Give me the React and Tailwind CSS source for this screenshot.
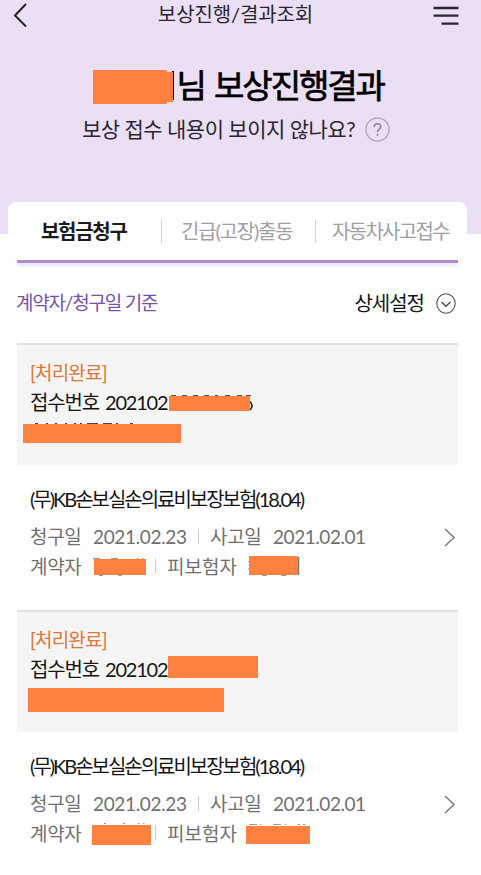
import React from 'react';
import clsx from 'clsx';

const claims = [
  {
    id: 1,
    receipt: '202102',
    masks: [
      'left-[152px] top-[53px] w-[81px] h-[15px]',
      'left-[6px] top-[81px] w-[158px] h-[19px]',
    ],
    contractorMask: 'left-[94px] top-[8px] w-[52px] h-[16px]',
    insuredMask: 'left-[249px] top-[5px] w-[49px] h-[19px]',
  },
  {
    id: 2,
    receipt: '202102',
    masks: [
      'left-[151px] top-[46px] w-[90px] h-[22px]',
      'left-[11px] top-[78px] w-[196px] h-[24px]',
    ],
    contractorMask: 'left-[92px] top-[7px] w-[59px] h-[20px]',
    insuredMask: 'left-[246px] top-[8px] w-[64px] h-[18px]',
  },
];

const Mask = ({ className }) => <span className={clsx('absolute bg-[#ff8140]', className)} />;

// Ink left visible around the masked receipt number and names
const Traces = ({ first }) => (
  <svg className="absolute left-0 top-0 w-[441px] h-[267px] pointer-events-none" viewBox="0 0 441 267" fill="none">
    {first ? (
      <>
        <path d="M154 52.500h5M165 52.500h5M176 52.500h5M187 52.500h5M198 52.500h3M208 52.500h5M220 52.500h5M229 52.500h5" stroke="#555" strokeWidth="1" />
        <path d="M233 58.500q4 4 0 8.500" stroke="#222" strokeWidth="1.500" />
        <path d="M18 80.500h3M29 80.500h2M38 80.500h2M48 80.500h2M57 80.500h2M63 80.500h2M70 80.500h11M86 80.500h9M99 80.500h2M113 80.500h3" stroke="#444" strokeWidth="1" />
        <path d="M76 215.500h7M94 215.500h7M120 215.500h1.500M125 215.500h1.500M82 232.500h4M101 232.500h4M231 218.500h1.500M231 226h1.500M245 232.500h5M264 232.500h5" stroke="#999" strokeWidth="1" />
        <path d="M281.500 214v18" stroke="#777" strokeWidth="1.500" />
      </>
    ) : (
      <path d="M87 213.500h2M106 213.500h2M121 213.500h1.500M126 213.500h1.500M232 214.500h8M243 214.500h1.500M256 214.500h8M268 214.500h1.500M281 214.500h2M286 214.500h2" stroke="#999" strokeWidth="1" />
    )}
  </svg>
);

const Divider = ({ className }) => <span className={clsx('w-px shrink-0', className)} />;

const ClaimItem = ({ claim }) => (
  <li className="relative h-[267px]">
    <div className="h-[121.500px] bg-[#f5f5f5] border-t-2 border-[#e1e1e1] pl-[13px] pt-[13px]">
      <p className="h-[29px] leading-[30px] text-[19px] tracking-[-0.800px] text-[#dc7833]">[처리완료]</p>
      <p className="h-[31px] leading-[31px] text-[20px] text-[#151515] flex">
        <span className="w-[75px] tracking-[-1.150px]">접수번호</span>
        <span className="tracking-[-1.200px]">{claim.receipt}</span>
      </p>
    </div>

    <div className="pl-[13px] pt-[19.500px]">
      <h3 className="h-[30px] leading-[30px] text-[20px] tracking-[-2.020px] text-[#151515] whitespace-nowrap">
        (무)KB손보실손의료비보장보험(18.04)
      </h3>
    </div>
    <Traces first={claim.id === 1} />
    {claim.masks.map((m) => <Mask key={m} className={m} />)}
    <div className="relative mt-[8px] -ml-[17px] pl-[30px] flex items-center h-[29px] text-[19px] leading-[29px] text-[#707070] whitespace-nowrap">
      <span className="w-[63px] tracking-[-0.300px]">청구일</span>
      <span className="w-[105px] tracking-[-0.350px]">2021.02.23</span>
      <Divider className="h-[15px] bg-[#cfcfcf]" />
      <span className="w-[63px] ml-[11px] tracking-[-0.300px]">사고일</span>
      <span className="tracking-[-0.450px]">2021.02.01</span>
      <svg className="absolute left-[443px] top-[6px] w-[13px] h-[19px]" viewBox="0 0 13 19" fill="none">
        <path d="M2 1l9 8.500L2 18" stroke="#777" strokeWidth="1.400" />
      </svg>
    </div>
    <div className="relative -ml-[17px] pl-[30px] flex items-center h-[29px] text-[19px] leading-[29px] text-[#707070] whitespace-nowrap">
      <span className="w-[125px] pt-[2px] tracking-[-0.300px]">계약자</span>
      <Divider className="h-[15px] bg-[#cfcfcf]" />
      <span className="ml-[11px] pt-[2px] tracking-[0px]">피보험자</span>
      <Mask className={claim.contractorMask} />
      <Mask className={claim.insuredMask} />
    </div>
  </li>
);

const App = () => {
  return (
    <div className="w-[481px] h-[875px] overflow-hidden bg-white font-['Lato','Noto_Sans_CJK_KR',sans-serif]">
      <header className="h-[234px] bg-[#ebdff6]">
        <div className="relative flex items-center justify-between h-[30px] pl-[13px] pr-[22px]">
          <svg className="w-[15px] h-[24px]" viewBox="0 0 15 24" fill="none">
            <path d="M13 1.500L2 13l11 11" transform="translate(0 -.5)" stroke="#222" strokeWidth="2" />
          </svg>
          <h2 className="text-[20px] leading-[28px] h-[30px] text-[#2a2630] tracking-[-0.100px] mr-[-10px]">보상진행/결과조회</h2>
          <svg className="w-[26px] h-[20px]" viewBox="0 0 26 20" fill="none">
            <path d="M0.500 3h25M0.500 10.700h25M8.500 18.600h17" stroke="#2a2630" strokeWidth="2.300" />
          </svg>
        </div>

        <div className="relative mt-[32px] h-[46px] pl-[176.500px]">
          <h1 className="text-[33px] leading-[46px] font-normal [-webkit-text-stroke:0.700px_black] text-black tracking-[-2.100px] [word-spacing:3px] whitespace-nowrap">님 보상진행결과</h1>
          <span className="absolute left-[172px] top-[9px] w-[2px] h-[29px] bg-black" />
          <Mask className="left-[93px] top-[8px] w-[74px] h-[34px]" />
          <Mask className="left-[167px] top-[10px] w-[6px] h-[30px]" />
        </div>

        <div className="flex items-center h-[42px] pl-[82px]">
          <p className="w-[283px] text-[21px] leading-[42px] h-[43px] tracking-[-0.500px] text-[#2a2630] whitespace-nowrap">
            보상 접수 내용이 보이지 않나요?
          </p>
          <svg className="w-[25px] h-[25px]" viewBox="0 0 25 25" fill="none">
            <circle cx="12.500" cy="12.500" r="11.500" stroke="#b4a9b9" strokeWidth="1.400" />
            <path d="M9.300 10c0-4.200 6.400-4.200 6.400-.5 0 2.700-3.200 2.500-3.200 5.500M12.500 16.800v2" stroke="#8e8495" strokeWidth="1.600" />
          </svg>
        </div>
      </header>

      {/* Tabs */}
      <nav className="relative -mt-[32px] ml-[8px] w-[459px] h-[61px] px-[9px] bg-white rounded-t-lg">
        <div className="flex items-center h-[58px] pl-[24px] text-[20px] whitespace-nowrap text-[#a0a0a0]">
          <span className="w-[120px] font-bold text-[#1a1a1a] tracking-[-1.300px]">보험금청구</span>
          <Divider className="h-[23px] bg-[#d5cfe2]" />
          <span className="w-[153px] pl-[19px] tracking-[-1.200px]">긴급(고장)출동</span>
          <Divider className="h-[23px] bg-[#d5cfe2]" />
          <span className="pl-[16px] tracking-[-1.700px]">자동차사고접수</span>
        </div>
        <div className="h-[3px] bg-[#ab8dd3] shadow-[0_2px_4px_rgba(120,90,160,0.25)]" />
      </nav>

      {/* Filter row */}
      <div className="flex items-center justify-between h-[80px] pl-[16px] pr-[25px]">
        <span className="text-[19px] text-[#7553a4] tracking-[-1.200px]">계약자/청구일 기준</span>
        <div className="flex items-center">
          <span className="text-[20px] text-[#151515] tracking-[-1px]">상세설정</span>
          <svg className="ml-[12px] w-[20px] h-[21px]" viewBox="0 0 20 21" fill="none">
            <ellipse cx="10" cy="10.500" rx="9.200" ry="9.700" stroke="#555" strokeWidth="1.100" />
            <path d="M5.500 9l4.500 4.300L14.500 9" stroke="#444" strokeWidth="1.300" />
          </svg>
        </div>
      </div>

      <ul className="mx-[17px] w-[441px]">
        {claims.map((c) => <ClaimItem key={c.id} claim={c} />)}
      </ul>
    </div>
  );
};

export default App;
